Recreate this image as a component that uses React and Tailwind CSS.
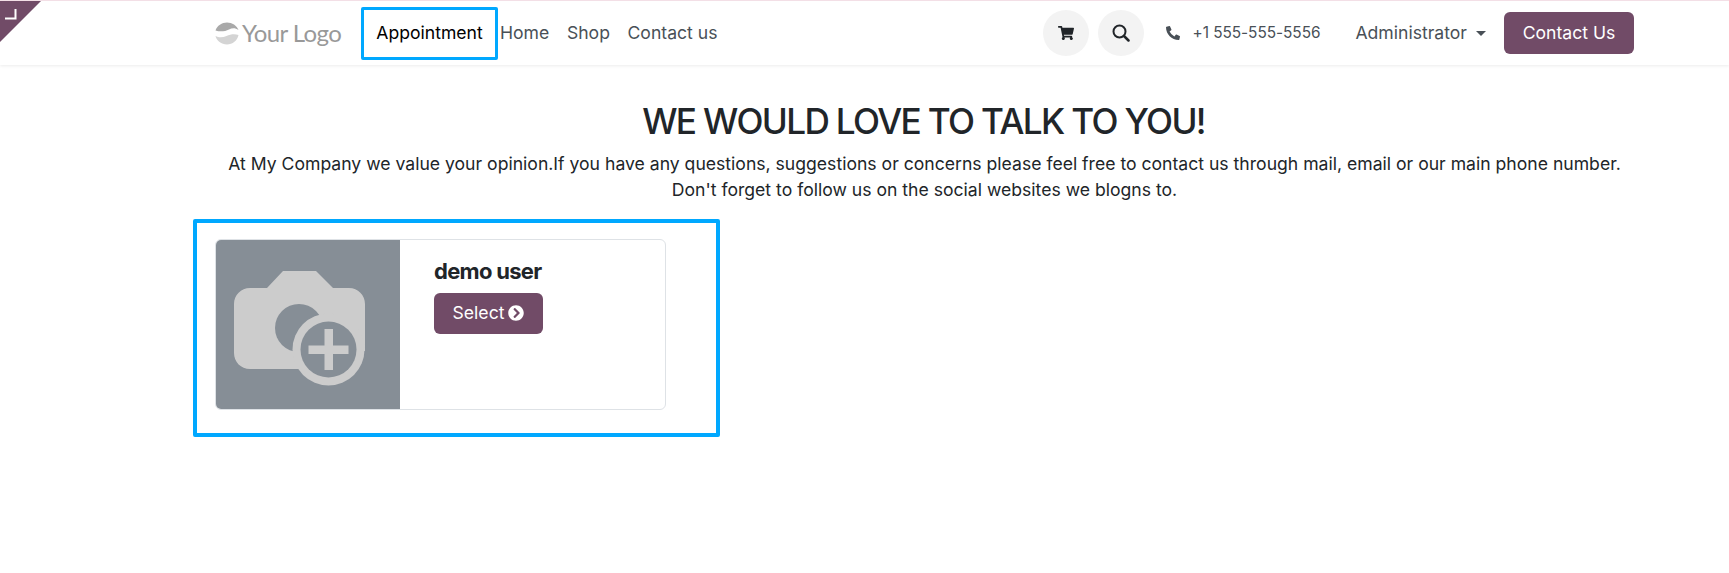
import React from "react";
import { FaShoppingCart, FaPhoneAlt, FaChevronCircleRight } from "react-icons/fa";

function Corner() {
  return (
    <svg className="absolute left-0 top-0" width="42" height="43" viewBox="0 0 42 43">
      <polygon points="0,1 41,1 0,42" fill="#714b67" />
      <path d="M15.500 9V18.500H5" fill="none" stroke="#fff" strokeWidth="2" />
    </svg>
  );
}

function LogoMark() {
  return (
    <svg width="24" height="23" viewBox="0 0 24 23" className="mr-[3px]">
      <path d="M0.500 8.500C2 3.500 7 0.500 12 0.500C17 0.500 22 3.500 23.500 8C20 5.500 17 6 14 7.500C10 9.500 5 10 0.500 8.500Z" fill="#a9a9a9" />
      <path d="M23.500 13C22.500 18.500 17.500 22.500 12 22.500C6.500 22.500 1.500 18.500 0.500 14C4 16 8 15.500 11.500 14C15.500 12 20 11.500 23.500 13Z" fill="#d4d4d4" />
    </svg>
  );
}

function SearchIcon() {
  return (
    <svg width="18" height="18" viewBox="0 0 18 18" fill="none" stroke="#212529">
      <circle cx="7.500" cy="7.500" r="6" strokeWidth="2" />
      <path d="M12 12L16.500 16.500" strokeWidth="2.500" strokeLinecap="round" />
    </svg>
  );
}

function CameraPlus() {
  return (
    <svg width="131" height="115" viewBox="0 0 131 115">
      <path
        fill="#cccccc"
        d="M16 17H33L49 0H82L99 17H115C124 17 131 24 131 33V80H90L78 98H16C7 98 0 91 0 82V33C0 24 7 17 16 17Z"
      />
      <circle cx="65" cy="57" r="24" fill="#868e96" />
      <circle cx="94.500" cy="78.500" r="36" fill="#cccccc" />
      <circle cx="94.500" cy="78.500" r="28" fill="#868e96" />
      <rect x="90.500" y="58" width="8.500" height="41" fill="#cccccc" />
      <rect x="74.500" y="74.500" width="40" height="8.500" fill="#cccccc" />
    </svg>
  );
}

export default function App() {
  return (
    <div className="min-h-[573px] bg-white font-['Inter',sans-serif] text-[#212529] relative">
      <Corner />
      <header className="h-[65px] border-t border-[#f3dfe6] shadow-[0_1px_3px_rgba(0,0,0,0.08)] flex items-center pl-[215px] pr-[95px] text-[17.6px] text-[#495057]">
        <div className="flex items-center w-[146px] font-['Lato',sans-serif] text-[24px] tracking-[-0.6px] text-[#999999]">
          <LogoMark />
          <span>Your Logo</span>
        </div>
        <a className="h-[53px] w-[137px] border-[3px] border-[#00a8ff] rounded-[2px] flex items-center justify-center text-black">Appointment</a>
        <nav className="flex items-center gap-[17.6px] ml-[2px]">
          <a>Home</a>
          <a>Shop</a>
          <a>Contact us</a>
        </nav>
        <div className="ml-auto flex items-center">
          <span className="w-[46px] h-[46px] rounded-full bg-[#f3f3f3] flex items-center justify-center text-[#212529] text-[16px]"><FaShoppingCart /></span>
          <span className="w-[46px] h-[46px] rounded-full bg-[#f3f3f3] flex items-center justify-center ml-[9px]"><SearchIcon /></span>
          <FaPhoneAlt className="ml-[22px] text-[14px] text-[#495057]" />
          <span className="ml-[13px] text-[15.4px] tracking-[-0.05px]">+1 555-555-5556</span>
          <span className="ml-[35px]">Administrator</span>
          <span className="ml-[9px] w-0 h-0 border-x-[5px] border-x-transparent border-t-[5px] border-t-[#495057]" />
          <button className="ml-[18px] w-[130px] h-[42px] rounded-[6px] bg-[#714b67] text-white text-[17.6px]">Contact Us</button>
        </div>
      </header>
      <main className="ml-[193px] w-[1463px] pt-[37px]">
        <h1 className="text-center text-[35.2px] leading-[38px] font-medium tracking-[-1.65px] -translate-x-px">WE WOULD LOVE TO TALK TO YOU!</h1>
        <div className="text-center text-[17.6px] leading-[26.4px] mt-[11px]">
          <p>At My Company we value your opinion.If you have any questions, suggestions or concerns please feel free to contact us through mail, email or our main phone number.</p>
          <p>Don't forget to follow us on the social websites we blogns to.</p>
        </div>
        <section className="mt-[15px] w-[527px] h-[218px] border-[4px] border-[#00a8ff] rounded-[2px] pl-[19px] pt-[16px]">
          <div className="-ml-px w-[451px] h-[171px] border border-[#dee2e6] rounded-[6px] flex overflow-hidden">
            <div className="w-[184px] bg-[#868e96] flex items-start justify-start pl-[18px] pt-[31px]">
              <CameraPlus />
            </div>
            <div className="pl-[34px] pt-[18px]">
              <h3 className="text-[22px] leading-[26px] font-bold tracking-[-0.7px]">demo user</h3>
              <button className="mt-[9px] w-[109px] h-[41px] rounded-[6px] bg-[#714b67] text-white text-[17.6px] flex items-center justify-center gap-[4px]">
                Select <FaChevronCircleRight className="text-[16px]" />
              </button>
            </div>
          </div>
        </section>
      </main>
    </div>
  );
}
